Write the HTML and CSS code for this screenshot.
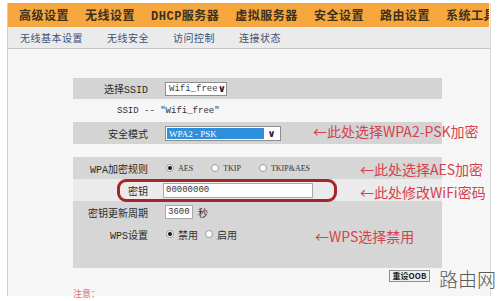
FILE: index.html
```html
<!DOCTYPE html>
<html lang="zh-CN">
<head>
    <meta charset="UTF-8">
    <meta name="viewport" content="width=device-width, initial-scale=1.0">
    <title>无线安全设置</title>
    <link rel="stylesheet" href="styles.css">
</head>
<body>
    <div class="frame">
        <div class="topnav">
            <span class="menu">高级设置</span>
            <span class="menu active">无线设置</span>
            <span class="menu"><span class="mono">DHCP</span>服务器</span>
            <span class="menu">虚拟服务器</span>
            <span class="menu">安全设置</span>
            <span class="menu">路由设置</span>
            <span class="menu">系统工具</span>
        </div>
        <div class="subnav">
            <span>无线基本设置</span>
            <span>无线安全</span>
            <span>访问控制</span>
            <span>连接状态</span>
        </div>

        <div class="content">
            <div class="panel">
                <div class="row shade">
                    <div class="label">选择SSID</div>
                    <div class="value">
                        <span class="select ssid"><span class="picked">Wifi_free</span><i class="arrow">&#8744;</i></span>
                    </div>
                </div>
                <div class="row">
                    <div class="ssid-text">SSID -- "Wifi_free"</div>
                </div>
                <div class="row shade">
                    <div class="label">安全模式</div>
                    <div class="value">
                        <span class="select mode"><span class="picked">WPA2 - PSK</span><i class="arrow">&#8744;</i></span>
                    </div>
                </div>
            </div>

            <div class="panel block">
                <div class="row">
                    <div class="label">WPA加密规则</div>
                    <div class="value">
                        <span class="radio on"></span><span class="opt">AES</span>
                        <span class="radio"></span><span class="opt">TKIP</span>
                        <span class="radio"></span><span class="opt">TKIP&amp;AES</span>
                    </div>
                </div>
                <div class="row light">
                    <div class="label">密钥</div>
                    <div class="value">
                        <span class="input key">00000000</span>
                    </div>
                </div>
                <div class="row">
                    <div class="label">密钥更新周期</div>
                    <div class="value">
                        <span class="input period">3600</span><span class="unit">秒</span>
                    </div>
                </div>
                <div class="row">
                    <div class="label">WPS设置</div>
                    <div class="value">
                        <span class="radio on"></span><span class="opt cn">禁用</span>
                        <span class="radio"></span><span class="opt cn">启用</span>
                    </div>
                </div>
            </div>

            <div class="actions">
                <button type="button">重设OOB</button>
            </div>
            <div class="notice">注意：</div>

            <!-- пометки поверх скриншота -->
            <div class="mark oval"></div>
            <div class="note note-mode">←此处选择WPA2-PSK加密</div>
            <div class="note note-aes">←此处选择AES加密</div>
            <div class="note note-key">←此处修改WiFi密码</div>
            <div class="note note-wps">←WPS选择禁用</div>
        </div>
    </div>

    <div class="watermark">路由网</div>
</body>
</html>
```

FILE: styles.css
```css
html, body {
    overflow: hidden;
}
body {
    margin: 0;
    position: relative;
    height: 301px;
    background-color: #ffffff;
    font-family: "Noto Sans CJK SC", "Liberation Sans", sans-serif;
    color: #333;
}
.frame {
    margin: 3px 0 0 7px;
    width: 482px;
    height: 293px;
    border-left: 1px solid #cfcfcf;
    border-right: 1px solid #dadada;
    background-color: #f6f6f6;
}
.mono {
    font-family: "Liberation Mono", "Noto Sans CJK SC", monospace;
}

/* верхнее меню */
.topnav {
    display: flex;
    gap: 16px;
    height: 24px;
    width: 470px;
    padding-left: 11px;
    background-color: #f6a73d;
    overflow: hidden;
}
.menu {
    position: relative;
    font-size: 12px;
    font-weight: bold;
    letter-spacing: 0.5px;
    line-height: 24px;
    color: #3d3020;
    white-space: nowrap;
}
.menu:last-child {
    flex-shrink: 0;
}
.menu.active::after {
    content: "";
    position: absolute;
    top: 100%;
    left: 50%;
    margin-left: -6px;
    border-left: 4px solid transparent;
    border-right: 4px solid transparent;
    border-top: 4px solid #8a8a8a;
}
.subnav {
    display: flex;
    gap: 24px;
    height: 21px;
    padding-left: 12px;
    background-color: #ebebeb;
    border-bottom: 1px solid #c4c4c4;
}
.subnav span {
    font-size: 10px;
    letter-spacing: 0.5px;
    line-height: 22px;
    color: #3e5176;
}

/* форма */
.content {
    position: relative;
    padding: 29px 0 0 65px;
}
.panel {
    width: 369px;
}
.panel.block {
    margin-top: 13px;
    padding-bottom: 23px;
    background-color: #d6d6d6;
}
.row {
    display: flex;
    align-items: center;
    height: 22px;
    font-size: 10px;
}
.panel:first-child .row:first-child {
    height: 21px;
}
.panel:first-child .row:nth-child(2) {
    height: 23px;
}
.row.shade {
    background-color: #d4d4d4;
}
.row.light {
    background-color: #ebebeb;
}
.label {
    width: 80px;
    padding-right: 5px;
    box-sizing: border-box;
    text-align: right;
    font-family: "Liberation Mono", "Noto Sans CJK SC", monospace;
    font-size: 10px;
    color: #2a2a2a;
    white-space: nowrap;
}
.value {
    display: flex;
    align-items: center;
    padding-left: 12px;
}
.ssid-text {
    padding-left: 44px;
    font-family: "Liberation Mono", monospace;
    font-size: 9px;
    color: #333;
}
.select {
    display: flex;
    align-items: center;
    box-sizing: border-box;
    background-color: #fff;
    border: 1px solid #8d8d8d;
    font-family: "Liberation Mono", monospace;
    font-size: 9px;
}
.select .arrow {
    font-style: normal;
    font-family: "DejaVu Sans", sans-serif;
    font-weight: bold;
    font-size: 10px;
    color: #223;
    text-align: center;
}
.select.ssid {
    width: 62px;
    height: 14px;
    padding-left: 3px;
}
.select.ssid .picked {
    flex: 1;
    color: #444;
}
.select.ssid .arrow {
    width: 12px;
}
.select.mode {
    width: 116px;
    height: 15px;
    padding: 1px;
}
.select.mode .picked {
    flex: 1;
    height: 100%;
    padding-left: 2px;
    background-color: #2f8fdb;
    color: #fff;
    line-height: 12px;
    font-family: "Liberation Serif", serif;
    font-size: 9px;
}
.select.mode .arrow {
    width: 15px;
}
.radio {
    width: 8px;
    height: 8px;
    box-sizing: border-box;
    margin-left: 1px;
    border: 1px solid #9a9a9a;
    border-radius: 50%;
    background-color: #fff;
    position: relative;
}
.radio.on::after {
    content: "";
    position: absolute;
    left: 1px;
    top: 1px;
    width: 4px;
    height: 4px;
    border-radius: 50%;
    background-color: #111;
}
.opt {
    margin: 0 17px 0 4px;
    font-family: "Liberation Serif", serif;
    font-size: 8px;
    color: #333;
}
.opt.cn {
    margin-right: 6px;
    font-family: "Noto Sans CJK SC", sans-serif;
    font-size: 10px;
}
.input {
    display: block;
    box-sizing: border-box;
    background-color: #fff;
    border: 1px solid #a8a8a8;
    font-family: "Liberation Mono", monospace;
    font-size: 9px;
    line-height: 13px;
    padding-left: 2px;
    color: #333;
}
.input.key {
    width: 150px;
    height: 15px;
    margin-left: -2px;
}
.input.period {
    width: 28px;
    height: 14px;
}
.unit {
    margin-left: 5px;
    font-size: 10px;
}
.actions {
    display: flex;
    justify-content: flex-end;
    width: 369px;
    padding-top: 2px;
}
.actions button {
    margin-right: 12px;
    width: 41px;
    height: 12px;
    padding: 0;
    border: 1px solid #8f8f8f;
    background-color: #efefef;
    font-family: "Noto Sans CJK SC", sans-serif;
    font-size: 8px;
    font-weight: bold;
    line-height: 10px;
    color: #222;
}
.notice {
    margin-top: 6px;
    font-size: 9px;
    line-height: 11px;
    color: #e06a72;
}

/* красные пометки */
.mark.oval {
    position: absolute;
    left: 109px;
    top: 130px;
    width: 220px;
    height: 23px;
    box-sizing: border-box;
    border: 3px solid #a8232c;
    border-radius: 9px;
}
.note {
    position: absolute;
    font-size: 14px;
    line-height: 16px;
    color: #d4424e;
    white-space: nowrap;
}
.note-mode { left: 305px; top: 74px; }
.note-aes { left: 352px; top: 112px; }
.note-key { left: 352px; top: 135px; }
.note-wps { left: 307px; top: 179px; }

.watermark {
    position: absolute;
    left: 439px;
    top: 269px;
    font-size: 19px;
    line-height: 1;
    color: #5a5a5a;
    font-weight: 300;
}
```
